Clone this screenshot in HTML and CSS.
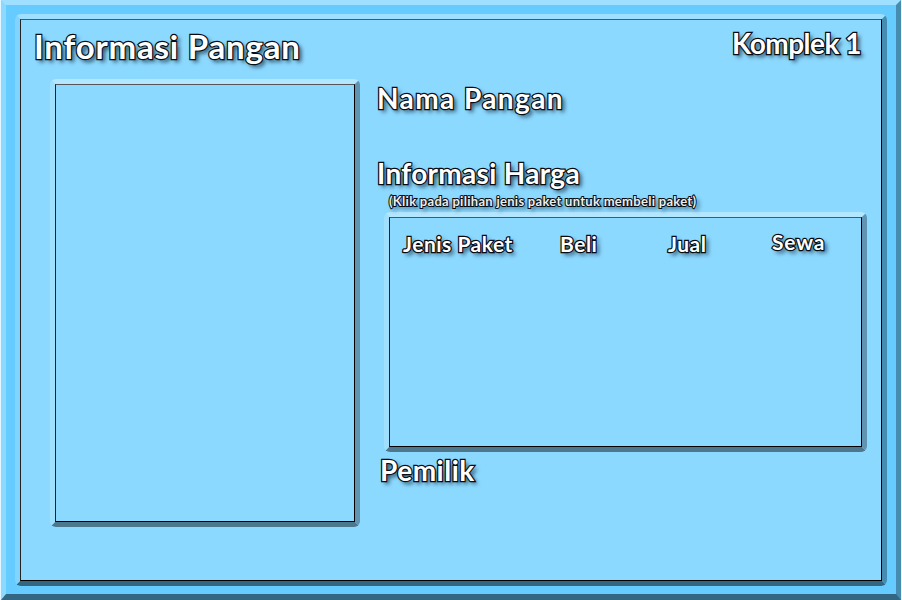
FILE: index.html
```html
<!DOCTYPE html>
<html lang="id">
<head>
<meta charset="utf-8">
<title>Informasi Pangan</title>
<link rel="stylesheet" href="styles.css">
</head>
<body>
<main class="frame">
  <div class="bevel bevel-main">
    <section class="panel main">
      <header class="header">
        <h1 class="title">Informasi Pangan</h1>
        <span class="block">Komplek 1</span>
      </header>
      <div class="content">
        <div class="bevel bevel-photo"><div class="panel"></div></div>
        <div class="details">
          <h2 class="name">Nama Pangan</h2>
          <h2 class="price">Informasi Harga</h2>
          <p class="hint">(Klik pada pilihan jenis paket untuk membeli paket)</p>
          <div class="bevel bevel-table">
            <div class="panel columns">
              <span class="jenis">Jenis Paket</span>
              <span class="beli">Beli</span>
              <span class="jual">Jual</span>
              <span class="sewa">Sewa</span>
            </div>
          </div>
          <h2 class="owner">Pemilik</h2>
        </div>
      </div>
    </section>
  </div>
</main>
</body>
</html>
```
FILE: styles.css
```css
* { box-sizing: border-box; }
body {
  margin: 0;
  width: 902px;
  height: 600px;
  overflow: hidden;
  background: #e4f6ff;
  font-family: Lato, "Liberation Sans", sans-serif;
  color: #fff;
}
h1, h2, p { margin: 0; }
.frame {
  width: 900px;
  height: 600px;
  margin-left: 1px;
  padding: 9px 9px 8px 9px;
  border: solid;
  border-width: 5px 5px 6px 5px;
  border-color: #9fdfff #468cb1 #336680 #8cd9ff;
  background: #66ccff;
}
.bevel {
  border: 5px solid;
  border-radius: 6px;
}
.panel {
  height: 100%;
  border: 1px solid;
  border-color: #555 #000 #000 #222;
  background: #8cd9ff;
}
.bevel-main {
  width: 872px;
  height: 572px;
  border-color: #9fdfff #468cb1 #336680 #80d4ff;
}
.header {
  display: flex;
  justify-content: space-between;
  height: 59px;
  padding: 4px 20px 0 13px;
}
h1, h2, .block, .hint, .columns span {
  font-weight: 700;
  white-space: nowrap;
  -webkit-text-stroke: 2.4px #080c10;
  paint-order: stroke fill;
  text-shadow: 3px 3px 4px rgba(0, 20, 35, .75);
}
.title { font-size: 33px; line-height: 44px; letter-spacing: .8px; }
.block { font-size: 28px; line-height: 38px; letter-spacing: -.5px; }
.content { display: flex; padding-left: 29px; }
.bevel-photo { width: 310px; height: 448px; }
.bevel-photo, .bevel-table { border-color: #b3e6ff #6094b0 #4d778c #a0e0ff; }
.details { width: 490px; padding-left: 17px; }
h2 { font-size: 28px; line-height: 38px; }
.name { letter-spacing: 1.4px; }
.price { margin-top: 37px; letter-spacing: .3px; }
.hint {
  height: 20px;
  padding-left: 12px;
  font-size: 13px;
  line-height: 18px;
  letter-spacing: .29px;
  color: #eee;
  -webkit-text-stroke-width: 2px;
}
.bevel-table { width: 483px; height: 240px; margin-left: 7px; }
.columns {
  display: grid;
  grid-template-columns: 157px 108px 104px 90px;
  align-content: start;
  padding: 11px 0 0 13px;
  font-size: 21px;
  line-height: 30px;
  letter-spacing: .5px;
}
.sewa { margin-top: -2px; letter-spacing: .8px; }
.owner { margin-top: -1px; padding-left: 3px; letter-spacing: .5px; }
```
